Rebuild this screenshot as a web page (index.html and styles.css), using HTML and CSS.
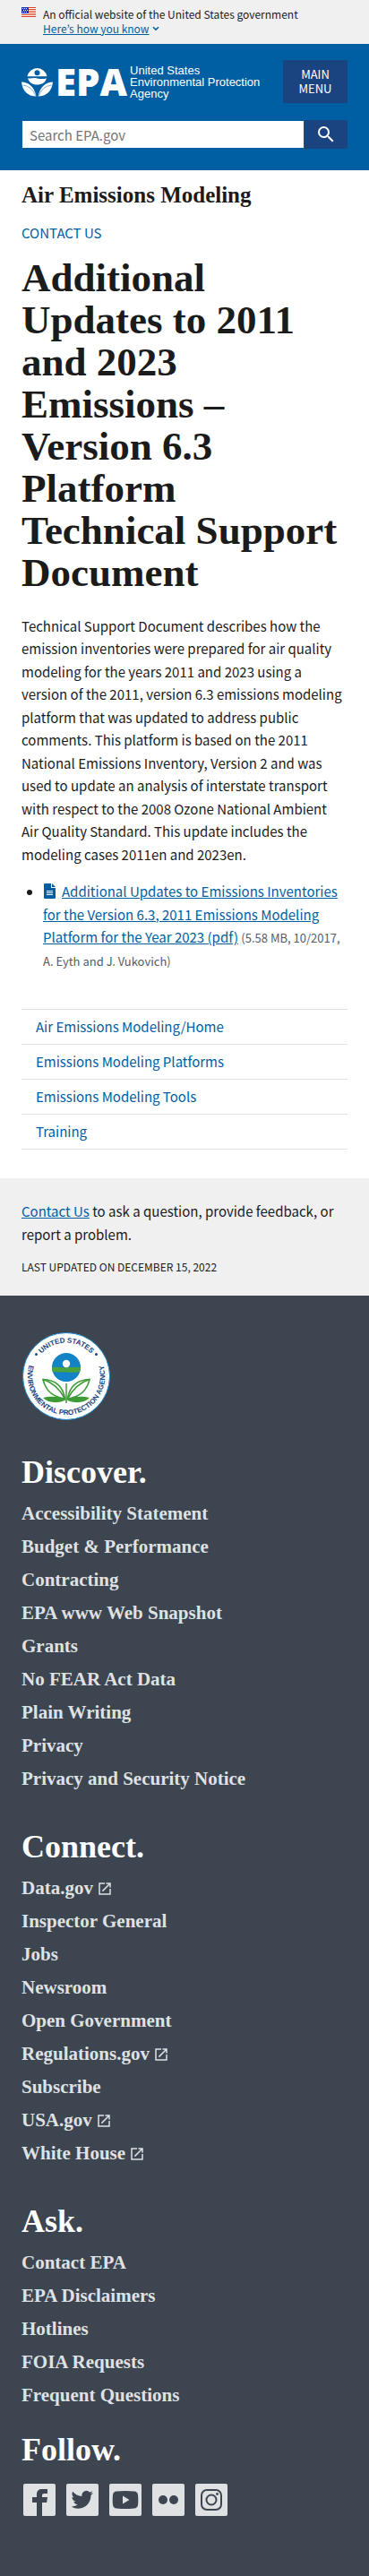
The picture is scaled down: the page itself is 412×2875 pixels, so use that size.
FILE: index.html
```html
<!DOCTYPE html>
<html lang="en">
<head>
<meta charset="utf-8">
<meta name="viewport" content="width=device-width, initial-scale=1">
<title>Additional Updates to 2011 and 2023 Emissions – Version 6.3 Platform Technical Support Document</title>
<link rel="stylesheet" href="styles.css">
</head>
<body>
<svg class="defs" aria-hidden="true">
  <symbol id="external" viewBox="0 0 24 24"><path d="M19 19H5V5h7V3H3v18h18v-9h-2zM14 3v2h3.600l-9.800 9.800 1.400 1.400L19 6.400V10h2V3z"/></symbol>
</svg>

<section class="banner">
  <svg class="flag" viewBox="0 0 16 11" aria-hidden="true">
    <rect width="16" height="11" fill="#fff"/>
    <path fill="#db3e1f" d="M0 0h16v1H0zM0 2h16v1H0zM0 4h16v1H0zM0 6h16v1H0zM0 8h16v1H0zM0 10h16v1H0z"/>
    <rect width="8" height="7" fill="#1e33b1"/>
    <path fill="#fff" d="M1 1h1v1H1zM3 1h1v1H3zM5 1h1v1H5zM2 3h1v1H2zM4 3h1v1H4zM6 3h1v1H6zM1 5h1v1H1zM3 5h1v1H3zM5 5h1v1H5z"/>
  </svg>
  <div class="banner-text">
    <p>An official website of the United States government</p>
    <button type="button" class="know"><span>Here’s how you know</span><svg viewBox="0 0 8 6" aria-hidden="true"><path d="M1 1.300l3 2.800 3-2.800" fill="none" stroke="currentColor" stroke-width="1.500"/></svg></button>
  </div>
</section>

<header class="header">
  <div class="header-top">
    <a class="logo" href="#">
      <svg class="flower" viewBox="0 0 35 36" aria-hidden="true">
        <g fill="#fff">
          <path d="M6.500 12.200A11.200 11.200 0 0 1 28.500 12.200z"/>
          <path d="M7 14.200c3 1 6-.8 10.500.2s7.500.8 10.500-.2C26.500 19 23 21.500 17.500 21.500S8.500 19 7 14.200z"/>
          <path d="M0 18.500c7 .5 14 4 16.500 16C7 34.500 1 28.500 0 18.500z"/>
          <path d="M35 18.500c-7 .5-14 4-16.500 16C28 34.500 34 28.500 35 18.500z"/>
        </g>
        <circle cx="17.500" cy="8.200" r="3" fill="#005ea2"/>
        <path d="M1.500 22q10 1 14.500 12M33.500 22q-10 1-14.500 12" fill="none" stroke="#005ea2" stroke-width=".5"/>
      </svg>
      <span class="epa">EPA</span>
      <span class="agency">United States<br>Environmental Protection<br>Agency</span>
    </a>
    <button type="button" class="menu">Main Menu</button>
  </div>
  <form class="search" role="search">
    <input type="search" aria-label="Search" placeholder="Search EPA.gov">
    <button type="submit" aria-label="Search"><svg viewBox="0 0 24 24" aria-hidden="true"><path fill="#fff" d="M15.500 14h-.79l-.28-.27A6.471 6.471 0 0 0 16 9.500 6.500 6.500 0 1 0 9.500 16c1.610 0 3.090-.59 4.230-1.570l.27.28v.79l5 4.990L20.490 19l-4.990-5zm-6 0C7.010 14 5 11.990 5 9.500S7.010 5 9.500 5 14 7.010 14 9.500 11.990 14 9.500 14z"/></svg></button>
  </form>
</header>

<main class="main">
  <h2 class="site-title">Air Emissions Modeling</h2>
  <a class="contact" href="#">CONTACT US</a>
  <h1>Additional Updates to 2011 and 2023 Emissions – Version 6.3 Platform Technical Support Document</h1>
  <p>Technical Support Document describes how the emission inventories were prepared for air quality modeling for the years 2011 and 2023 using a version of the 2011, version 6.3 emissions modeling platform that was updated to address public comments. This platform is based on the 2011 National Emissions Inventory, Version 2 and was used to update an analysis of interstate transport with respect to the 2008 Ozone National Ambient Air&nbsp;Quality Standard. This update includes the modeling cases 2011en and 2023en.</p>
  <ul class="files">
    <li><svg class="file-icon" viewBox="0 0 13 17" aria-hidden="true"><path fill="#005ea2" d="M1 0h7v5h5v11a1 1 0 0 1-1 1H1a1 1 0 0 1-1-1V1a1 1 0 0 1 1-1z"/><path fill="#005ea2" d="M9 0l4 4H9z"/><path stroke="#fff" d="M3 8.500h7M3 10.500h7M3 12.500h7"/></svg><a href="#">Additional Updates to Emissions Inventories for the Version 6.3, 2011 Emissions Modeling Platform for the Year 2023 (pdf)</a> <span class="meta">(5.58 MB, 10/2017, A. Eyth and J. Vukovich)</span></li>
  </ul>
  <nav class="sidenav" aria-label="Section">
    <a href="#">Air Emissions Modeling/Home</a>
    <a href="#">Emissions Modeling Platforms</a>
    <a href="#">Emissions Modeling Tools</a>
    <a href="#">Training</a>
  </nav>
</main>

<section class="feedback">
  <p><a href="#">Contact Us</a> to ask a question, provide feedback, or report a problem.</p>
  <p class="updated">LAST UPDATED ON DECEMBER 15, 2022</p>
</section>

<footer class="footer">
  <svg class="seal" viewBox="0 0 100 100" role="img" aria-label="Environmental Protection Agency seal">
    <defs>
      <path id="arc-top" d="M12.500 50a37.500 37.500 0 0 1 75 0"/>
      <path id="arc-bottom" d="M11.400 30.500A43.200 43.200 0 1 0 88.600 30.500"/>
    </defs>
    <circle cx="50" cy="50" r="48.500" fill="#fff" stroke="#1a86c8"/>
    <text class="seal-text" text-anchor="middle"><textPath href="#arc-top" startOffset="50%">UNITED STATES</textPath></text>
    <text class="seal-text" text-anchor="middle"><textPath href="#arc-bottom" startOffset="50%">ENVIRONMENTAL PROTECTION AGENCY</textPath></text>
    <circle cx="16.500" cy="25.500" r="1.500" fill="#1a4480"/>
    <circle cx="83.500" cy="25.500" r="1.500" fill="#1a4480"/>
    <circle cx="50" cy="40" r="16" fill="#1183c6"/>
    <path fill="#4ba23c" d="M34 40c5-1 10 .6 16 .3s11-.8 16-.3c0 2-.3 3.500-.9 5-5 1-9 .6-15 .4s-10 .3-15.200-.4C34.200 43.500 34 42 34 40z"/>
    <path fill="#1183c6" d="M36 47.500q14-2 28 0a16 16 0 0 1-28 0z"/>
    <circle cx="50" cy="36" r="4.200" fill="#fff"/>
    <path d="M50 58v22" stroke="#3d9b35" stroke-width="1.500"/>
    <g fill="#fff" stroke="#3d9b35" stroke-width="1.600">
      <path d="M48.500 75C46 60 37 54 24 53.500 27 66 34 73 48.500 75z"/>
      <path d="M51.500 75C54 60 63 54 76 53.500 73 66 66 73 51.500 75z"/>
      <path d="M24 53.500Q39 58 48.500 75M76 53.500Q61 58 51.500 75" fill="none"/>
    </g>
    <path fill="#3d9b35" d="M50 76c-8-4-19-4-26-2 6 6 17 7 26 2zM50 76c8-4 19-4 26-2-6 6-17 7-26 2z"/>
  </svg>

  <section>
    <h2>Discover.</h2>
    <ul>
      <li><a href="#">Accessibility Statement</a></li>
      <li><a href="#">Budget &amp; Performance</a></li>
      <li><a href="#">Contracting</a></li>
      <li><a href="#">EPA www Web Snapshot</a></li>
      <li><a href="#">Grants</a></li>
      <li><a href="#">No FEAR Act Data</a></li>
      <li><a href="#">Plain Writing</a></li>
      <li><a href="#">Privacy</a></li>
      <li><a href="#">Privacy and Security Notice</a></li>
    </ul>
  </section>
  <section>
    <h2>Connect.</h2>
    <ul>
      <li><a href="#">Data.gov<svg class="ext" aria-hidden="true"><use href="#external"/></svg></a></li>
      <li><a href="#">Inspector General</a></li>
      <li><a href="#">Jobs</a></li>
      <li><a href="#">Newsroom</a></li>
      <li><a href="#">Open Government</a></li>
      <li><a href="#">Regulations.gov<svg class="ext" aria-hidden="true"><use href="#external"/></svg></a></li>
      <li><a href="#">Subscribe</a></li>
      <li><a href="#">USA.gov<svg class="ext" aria-hidden="true"><use href="#external"/></svg></a></li>
      <li><a href="#">White House<svg class="ext" aria-hidden="true"><use href="#external"/></svg></a></li>
    </ul>
  </section>
  <section>
    <h2>Ask.</h2>
    <ul>
      <li><a href="#">Contact EPA</a></li>
      <li><a href="#">EPA Disclaimers</a></li>
      <li><a href="#">Hotlines</a></li>
      <li><a href="#">FOIA Requests</a></li>
      <li><a href="#">Frequent Questions</a></li>
    </ul>
  </section>
  <section class="follow">
    <h2>Follow.</h2>
    <div class="social">
      <a href="#" aria-label="Facebook"><svg viewBox="0 0 36 36"><rect width="36" height="36" rx="2"/><path class="ink" d="M15 36V21h-5v-6h5v-3.500C15 8 17.500 6 21 6h6v5h-3.500c-2 0-2.500.8-2.500 2.300V15h6l-.8 6H21v15z"/></svg></a>
      <a href="#" aria-label="Twitter"><svg viewBox="0 0 36 36"><rect width="36" height="36" rx="2"/><path class="ink" transform="translate(5.500 5.500) scale(1.020)" d="M23.950 4.570a10 10 0 0 1-2.820.77 4.960 4.960 0 0 0 2.160-2.720c-.95.550-2 .950-3.130 1.180a4.920 4.920 0 0 0-8.380 4.480C7.690 8.090 4.070 6.130 1.640 3.160a4.920 4.920 0 0 0 1.520 6.570 4.900 4.900 0 0 1-2.230-.61v.06a4.920 4.920 0 0 0 3.950 4.830 5 5 0 0 1-2.210.080 4.940 4.940 0 0 0 4.600 3.420A9.870 9.870 0 0 1 0 19.540a13.990 13.990 0 0 0 7.550 2.210c9.050 0 14-7.500 14-13.980l-.02-.64a9.940 9.940 0 0 0 2.420-2.560z"/></svg></a>
      <a href="#" aria-label="YouTube"><svg viewBox="0 0 36 36"><rect width="36" height="36" rx="2"/><path class="ink" d="M8 8.500q10-1 20 0 3.500.3 4 4 .6 5.500 0 11-.5 3.700-4 4-10 1-20 0-3.500-.3-4-4-.6-5.500 0-11 .5-3.700 4-4z"/><path d="M15 13.500v9l7.500-4.500z"/></svg></a>
      <a href="#" aria-label="Flickr"><svg viewBox="0 0 36 36"><rect width="36" height="36" rx="2"/><circle class="ink" cx="12" cy="18" r="5"/><circle class="ink" cx="24" cy="18" r="5"/></svg></a>
      <a href="#" aria-label="Instagram"><svg viewBox="0 0 36 36"><rect width="36" height="36" rx="2"/><g class="line"><rect x="7" y="7" width="22" height="22" rx="6"/><circle cx="18" cy="18" r="5.500"/></g><circle class="ink" cx="24.500" cy="11.500" r="1.400"/></svg></a>
    </div>
  </section>
</footer>
</body>
</html>
```
FILE: styles.css
```css
* { box-sizing: border-box; }

body {
  margin: 0;
  background: #fff;
  color: #1b1b1b;
  font-family: "Noto Sans CJK KR", "Noto Sans", sans-serif;
  font-size: 15px;
  line-height: 1.7;
}

h1, h2, p, ul { margin: 0; padding: 0; }

h1, h2, .footer {
  font-family: "Liberation Serif", serif;
  font-weight: 700;
}

a { color: #005ea2; }
button { font-family: inherit; cursor: pointer; }
.defs { display: none; }

.banner {
  display: flex;
  gap: 8px;
  padding: 8px 24px 9px;
  background: #f0f0f0;
  font-size: 12px;
  line-height: 16px;
}
.flag { width: 16px; height: 11px; flex: none; }
.know {
  display: flex;
  align-items: center;
  gap: 4px;
  padding: 0;
  border: 0;
  background: none;
  color: #005ea2;
  font-size: 12px;
  line-height: 16px;
}
.know span { text-decoration: underline; }
.know svg { width: 8px; height: 6px; }

.header {
  padding: 18px 24px 24px;
  background: #005ea2;
}
.header-top {
  display: flex;
  justify-content: space-between;
  align-items: center;
  margin-bottom: 19px;
}
.logo {
  display: flex;
  align-items: center;
  gap: 3px;
  color: #fff;
  text-decoration: none;
}
.flower { width: 35px; height: 36px; }
.epa {
  font-family: "Open Sans", sans-serif;
  font-size: 42px;
  font-weight: 800;
  line-height: 36px;
}
.agency {
  font-family: "Liberation Sans", sans-serif;
  font-size: 13px;
  line-height: 13px;
  white-space: nowrap;
}
.menu {
  width: 72px;
  padding: 8px 12px;
  border: 0;
  border-radius: 2px;
  background: #1a4480;
  color: #fff;
  font-size: 13px;
  line-height: 16px;
  text-transform: uppercase;
}
.search { display: flex; }
.search input {
  flex: 1;
  min-width: 0;
  height: 32px;
  padding: 0 8px;
  border: 1px solid #005ea2;
  border-radius: 0;
  background: #fff;
  font-family: inherit;
  font-size: 15px;
  appearance: none;
}
.search input::placeholder { color: #757575; }
.search button {
  display: grid;
  place-items: center;
  width: 48px;
  padding: 0;
  border: 0;
  border-radius: 0 2px 2px 0;
  background: #1a4480;
}
.search button svg { width: 24px; height: 24px; }

.main { padding: 14px 24px 32px; }
.site-title { font-size: 25px; line-height: 28px; }
.contact {
  display: block;
  margin: 15px 0 14px;
  text-decoration: none;
}
h1 {
  margin-bottom: 23px;
  font-size: 45px;
  line-height: 47px;
}
.files {
  margin: 16px 0 42px;
  padding-left: 24px;
}
.file-icon {
  width: 13px;
  height: 17px;
  margin: 0 7px 0 1px;
  vertical-align: -2px;
}
.meta { color: #565c65; font-size: 13px; }

.sidenav { border-bottom: 1px solid #dfe1e2; }
.sidenav a {
  display: block;
  padding: 8px 16px;
  border-top: 1px solid #dfe1e2;
  line-height: 22px;
  text-decoration: none;
}

.feedback {
  padding: 24px 24px 20px;
  background: #f0f0f0;
}
.updated { margin-top: 12px; font-size: 12px; line-height: 24px; }

.footer {
  padding: 40px 24px 67px;
  background: #3d4551;
}
.seal { display: block; width: 100px; height: 100px; }
.seal-text {
  fill: #1a4480;
  font-family: "Liberation Sans", sans-serif;
  font-size: 8px;
  font-weight: 700;
}
.footer section { margin-top: 37px; }
.footer .follow { margin-top: 22px; }
.footer h2 {
  margin-bottom: 8px;
  color: #fff;
  font-size: 36px;
  line-height: 40px;
}
.footer ul { list-style: none; }
.footer li {
  font-size: 21px;
  line-height: 37px;
}
.footer a { color: #dfe1e2; text-decoration: none; }
.ext {
  width: 18px;
  height: 18px;
  margin-left: 4px;
  fill: currentColor;
  vertical-align: -3px;
}
.social {
  display: flex;
  gap: 12px;
  padding: 10px 2px 0;
}
.social svg {
  display: block;
  width: 36px;
  height: 36px;
  fill: #dfe1e2;
}
.social .ink { fill: #3d4551; }
.social .line { fill: none; stroke: #3d4551; stroke-width: 2; }
```
